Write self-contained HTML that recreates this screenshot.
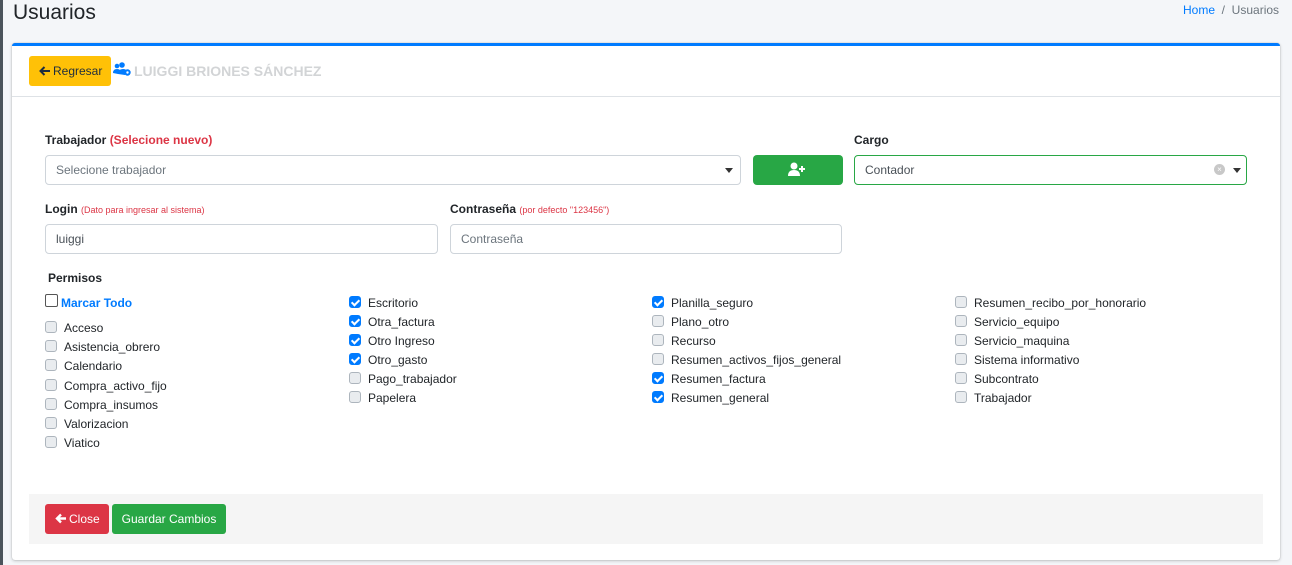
<!DOCTYPE html>
<html><head><meta charset="utf-8">
<style>
*{box-sizing:border-box;margin:0;padding:0}
body{width:1292px;height:565px;background:#f4f6f9;font-family:"Liberation Sans",sans-serif;color:#212529;position:relative;overflow:hidden;font-size:12px}
.a{position:absolute;white-space:nowrap}
.card{position:absolute;left:12px;top:43px;width:1268px;height:517px;background:#fff;border-top:3px solid #007bff;border-radius:3px;box-shadow:0 0 1px rgba(0,0,0,.25),0 1px 3px rgba(0,0,0,.2)}
.inp{position:absolute;height:30px;border:1px solid #ced4da;border-radius:4px;background:#fff;font-size:12px;color:#495057;padding:0 10px;line-height:29px}
.lbl{position:absolute;font-weight:bold;font-size:12px;color:#212529}
.cb{position:absolute;width:12px;height:12px;border:1px solid #adb5bd;border-radius:3px;background:#e9ecef}
.cb.on{background:#007bff;border-color:#007bff}
.cb.on::after{content:"";position:absolute;left:3px;top:1px;width:3px;height:6px;border:solid #fff;border-width:0 2px 2px 0;transform:rotate(45deg)}
.t{position:absolute;font-size:12px;color:#212529;white-space:nowrap}
.caret{position:absolute;width:0;height:0;border-left:4px solid transparent;border-right:4px solid transparent;border-top:5px solid #333}
</style></head><body>
<div class="a" style="left:0;top:0;width:3px;height:565px;background:#4b545c"></div>
<div class="a" style="left:13px;top:1px;font-size:21px;color:#212529">Usuarios</div>
<div class="a" style="left:1183px;top:3px;font-size:12px;color:#6c757d"><span style="color:#007bff">Home</span> &nbsp;/&nbsp; Usuarios</div>
<div class="card">
 <div class="a" style="left:0;top:50px;width:1268px;height:1px;background:#dee2e6"></div>
 <div class="a" style="left:17px;top:10px;width:82px;height:30px;background:#ffc107;border-radius:3px;font-size:12px;line-height:30px;padding-left:24px;color:#1f2d3d">Regresar</div>
 <svg class="a" style="left:27px;top:20px" width="12" height="10" viewBox="0 0 12 10"><path d="M11 5H2M5.5 1L1.5 5l4 4" stroke="#1f2d3d" stroke-width="2" fill="none"/></svg>
 <svg class="a" style="left:101px;top:16px" width="19" height="15" viewBox="0 0 19 15"><circle cx="4" cy="4" r="2.3" fill="#007bff"/><circle cx="9" cy="3" r="2.8" fill="#007bff"/><path d="M0 11 q0-4 4-4 q2 0 3 1 l-2 4z M5 12 q0-5 5-5 q3 0 4 2 l-2 4z" fill="#007bff"/><circle cx="14.5" cy="10.5" r="3.2" fill="#007bff"/><circle cx="14.5" cy="10.5" r="1.2" fill="#fff"/></svg>
 <div class="a" style="left:122px;top:17px;font-size:14px;font-weight:bold;color:#d2d4d6">LUIGGI BRIONES SÁNCHEZ</div>

 <div class="lbl" style="left:33px;top:87px">Trabajador <span style="color:#dc3545">(Selecione nuevo)</span></div>
 <div class="inp" style="left:33px;top:109px;width:696px;color:#6c757d">Selecione trabajador</div>
 <div class="caret" style="left:713px;top:122px"></div>
 <div class="a" style="left:741px;top:109px;width:90px;height:30px;background:#28a745;border-radius:4px"></div>
 <svg class="a" style="left:776px;top:116px" width="19" height="15" viewBox="0 0 19 15"><circle cx="6" cy="4" r="3.5" fill="#fff"/><path d="M0 14 q0-6 6-6 q6 0 6 6z" fill="#fff"/><path d="M14 4v6M11 7h6" stroke="#fff" stroke-width="2"/></svg>
 <div class="lbl" style="left:842px;top:87px">Cargo</div>
 <div class="inp" style="left:842px;top:109px;width:393px;border-color:#28a745">Contador</div>
 <div class="a" style="left:1202px;top:118px;width:11px;height:11px;border-radius:50%;background:#c8c8c8;color:#fff;font-size:8px;line-height:11px;text-align:center">×</div>
 <div class="caret" style="left:1221px;top:122px"></div>

 <div class="lbl" style="left:33px;top:156px">Login <span style="font-weight:normal;font-size:9px;color:#dc3545">(Dato para ingresar al sistema)</span></div>
 <div class="inp" style="left:33px;top:178px;width:393px">luiggi</div>
 <div class="lbl" style="left:438px;top:156px">Contraseña <span style="font-weight:normal;font-size:9px;color:#dc3545">(por defecto "123456")</span></div>
 <div class="inp" style="left:438px;top:178px;width:392px;color:#6c757d">Contraseña</div>

 <div class="lbl" style="left:36px;top:225px">Permisos</div>
 <div class="a" style="left:33px;top:248px;width:13px;height:13px;border:1px solid #555;border-radius:2px;background:#fff"></div>
 <div class="t" style="left:49px;top:250px;font-weight:bold;color:#007bff">Marcar Todo</div>
</div>
<div id="cbs"></div>
<script>
var cols=[[45,[["Acceso",327],["Asistencia_obrero",346],["Calendario",365],["Compra_activo_fijo",385],["Compra_insumos",404],["Valorizacion",423],["Viatico",442]]],
[349,[["Escritorio",302,1],["Otra_factura",321,1],["Otro Ingreso",340,1],["Otro_gasto",359,1],["Pago_trabajador",378],["Papelera",397]]],
[652,[["Planilla_seguro",302,1],["Plano_otro",321],["Recurso",340],["Resumen_activos_fijos_general",359],["Resumen_factura",378,1],["Resumen_general",397,1]]],
[955,[["Resumen_recibo_por_honorario",302],["Servicio_equipo",321],["Servicio_maquina",340],["Sistema informativo",359],["Subcontrato",378],["Trabajador",397]]]];
var h="";cols.forEach(function(c){c[1].forEach(function(r){h+='<div class="cb'+(r[2]?' on':'')+'" style="left:'+c[0]+'px;top:'+(r[1]-6)+'px"></div><div class="t" style="left:'+(c[0]+19)+'px;top:'+(r[1]-6)+'px">'+r[0]+'</div>';});});
document.getElementById("cbs").innerHTML=h;
</script>
<div class="a" style="left:29px;top:494px;width:1234px;height:50px;background:#f5f5f5"></div>
<div class="a" style="left:45px;top:504px;width:64px;height:30px;background:#dc3545;border-radius:3px;color:#fff;font-size:12px;line-height:30px;padding-left:24px">Close</div>
<svg class="a" style="left:55px;top:513px" width="12" height="11" viewBox="0 0 12 11"><path d="M11 5.5H2.5M6 1.5L2 5.5l4 4" stroke="#fff" stroke-width="2.4" fill="none"/></svg>
<div class="a" style="left:112px;top:504px;width:114px;height:30px;background:#28a745;border-radius:3px;color:#fff;font-size:12px;line-height:30px;text-align:center">Guardar Cambios</div>
</body></html>
